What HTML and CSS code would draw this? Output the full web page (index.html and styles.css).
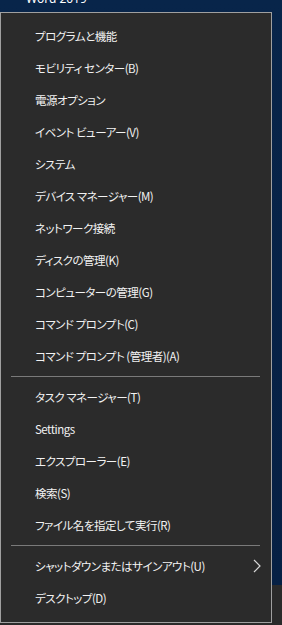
FILE: index.html
```html
<!DOCTYPE html>
<html lang="ja">
<head>
<meta charset="utf-8">
<link rel="stylesheet" href="styles.css">
</head>
<body>
<div class="desk">
  <div class="app-label">Word 2019</div>
</div>
<div class="menu">
  <div class="item">プログラムと機能</div>
  <div class="item">モビリティ センター(B)</div>
  <div class="item">電源オプション</div>
  <div class="item">イベント ビューアー(V)</div>
  <div class="item">システム</div>
  <div class="item">デバイス マネージャー(M)</div>
  <div class="item">ネットワーク接続</div>
  <div class="item">ディスクの管理(K)</div>
  <div class="item">コンピューターの管理(G)</div>
  <div class="item">コマンド プロンプト(C)</div>
  <div class="item">コマンド プロンプト (管理者)(A)</div>
  <div class="sep"></div>
  <div class="item">タスク マネージャー(T)</div>
  <div class="item">Settings</div>
  <div class="item">エクスプローラー(E)</div>
  <div class="item">検索(S)</div>
  <div class="item">ファイル名を指定して実行(R)</div>
  <div class="sep"></div>
  <div class="item has-sub">シャットダウンまたはサインアウト(U)
    <svg class="chev" width="8" height="14" viewBox="0 0 8 14"><path d="M1 1 L7 7 L1 13" fill="none" stroke="#d8d8d8" stroke-width="1.2"/></svg>
  </div>
  <div class="item">デスクトップ(D)</div>
</div>
</body>
</html>
```
FILE: styles.css
```css
html, body {
  margin: 0;
  padding: 0;
}
body {
  width: 282px;
  height: 625px;
  overflow: hidden;
  background: linear-gradient(to bottom, #08254a 0, #062044 585px, #2a2a2a 585px);
  font-family: "Noto Sans CJK JP", "Noto Sans", sans-serif;
  color: #fff;
}
.desk {
  height: 12px;
  overflow: hidden;
}
.app-label {
  margin-top: -9px;
  padding-left: 26px;
  font-family: "Noto Sans", sans-serif;
  font-size: 12px;
  line-height: 16px;
  color: #fff;
}
.menu {
  background: #2b2b2b;
  border: 1px solid #a0a0a0;
  padding: 7px 0 0;
  box-sizing: border-box;
  height: 611px;
  width: 272px;
  display: flex;
  flex-direction: column;
}
.item {
  height: 32px;
  line-height: 32px;
  padding-left: 34px;
  font-size: 11.5px;
  font-feature-settings: "palt";
  letter-spacing: -0.5px;
  color: #f2f2f2;
  white-space: nowrap;
  display: flex;
  align-items: center;
}
.has-sub {
  justify-content: space-between;
  padding-right: 10px;
}
.chev {
  display: block;
}
.sep {
  height: 1px;
  background: #7a7a7a;
  margin: 4px 11px 4px 10px;
}
```
